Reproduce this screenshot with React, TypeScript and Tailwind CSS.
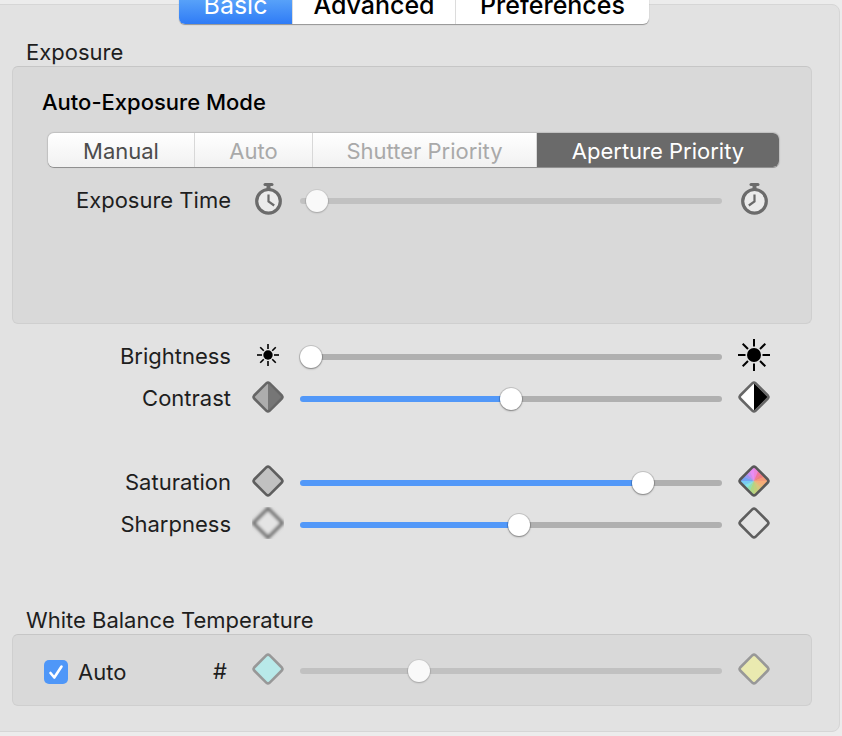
import { useState } from "react";
import type { ReactNode } from "react";

const DIAMOND = "M14.5 2.2Q16 0.9 17.5 2.2L29.8 14.5Q31.1 16 29.8 17.5L17.5 29.8Q16 31.1 14.5 29.8L2.2 17.5Q0.9 16 2.2 14.5Z";

function Icon({ children }: { children: ReactNode }) {
  return (
    <svg viewBox="0 0 32 32" className="mb-1 size-8 shrink-0" aria-hidden="true">
      {children}
    </svg>
  );
}

function Diamond({ fill, stroke = "#5e5e5e", children }: { fill: string; stroke?: string; children?: ReactNode }) {
  return (
    <Icon>
      <path d={DIAMOND} fill={fill} />
      {children}
      <path d={DIAMOND} fill="none" stroke={stroke} strokeWidth="2.6" />
    </Icon>
  );
}

function SplitDiamond({ left, right }: { left: string; right: string }) {
  return (
    <Diamond fill={left} stroke="#666666">
      <path d="M16 2L30 16L16 30Z" fill={right} />
    </Diamond>
  );
}

function SoftDiamond() {
  return (
    <Icon>
      <filter id="soften" x="-20%" y="-20%" width="140%" height="140%">
        <feGaussianBlur stdDeviation="1.5" />
      </filter>
      <path d="M16 1.5L30.5 16L16 30.5L1.5 16Z" fill="#e4e4e4" stroke="#727272" strokeWidth="3.6" strokeLinejoin="round" filter="url(#soften)" />
    </Icon>
  );
}

// Hues run clockwise from the top corner.
const HUES = [
  "#ec86d8", "#f2749c", "#f07c80", "#f39a78", "#f6ac78", "#eab877", "#d6c87c",
  "#c2d07c", "#b0d684", "#93dfb0", "#84e6e6", "#78ccf4", "#74a4f4", "#9a98f6", "#cc8ef4", "#e88cf4",
];

function ColorDiamond() {
  const step = 360 / HUES.length;
  return (
    <Diamond fill="#d8b8a0" stroke="#585858">
      <clipPath id="wheel">
        <path d={DIAMOND} />
      </clipPath>
      <g clipPath="url(#wheel)">
        {HUES.map((hue, i) => (
          <path key={hue} d="M16 16V-4H25Z" fill={hue} transform={`rotate(${i * step} 16 16)`} />
        ))}
      </g>
    </Diamond>
  );
}

function Sun({ large }: { large?: boolean }) {
  const rays = [0, 45, 90, 135, 180, 225, 270, 315];
  return (
    <Icon>
      <circle cx="16" cy="16" r={large ? 7 : 4.7} fill="#000" />
      {rays.map((angle) => (
        <path
          key={angle}
          d={large ? "M16 0V7.5" : "M16 5V10"}
          stroke="#000"
          strokeWidth={large ? 2 : 1.6}
          transform={`rotate(${angle} 16 16)`}
        />
      ))}
    </Icon>
  );
}

function Stopwatch({ long }: { long?: boolean }) {
  return (
    <Icon>
      <path d="M13 1.5H20" fill="none" stroke="#6b6b6b" strokeWidth="3" strokeLinecap="round" />
      <path d="M16.5 2V7" fill="none" stroke="#6b6b6b" strokeWidth="4" />
      <circle cx="16.5" cy="18.3" r="11.8" fill="#ebebeb" stroke="#6b6b6b" strokeWidth="3.2" />
      <path d={long ? "M16.5 11.5V18.5L10.8 22.5" : "M16.5 11.5V18.5L22.2 22.5"} fill="none" stroke="#6b6b6b" strokeWidth="2.2" />
    </Icon>
  );
}

type RangeProps = { id: string; initial: number; filled?: boolean; disabled?: boolean; label?: string };

function Range({ id, initial, filled, disabled, label }: RangeProps) {
  const [value, setValue] = useState(initial);
  const rest = disabled ? "#c1c1c1" : "#b0b0b0";
  const stop = filled ? value : 0;
  return (
    <input
      id={id}
      type="range"
      min={0}
      max={200}
      value={value}
      disabled={disabled}
      aria-label={label}
      onChange={(e) => setValue(Number(e.target.value))}
      style={{ backgroundImage: `linear-gradient(to right, #5298f8 ${stop / 2}%, ${rest} ${stop / 2}%)` }}
      className="mx-4 h-[6px] min-w-0 flex-1 appearance-none rounded-full [&::-webkit-slider-thumb]:size-[22px] [&::-webkit-slider-thumb]:appearance-none [&::-webkit-slider-thumb]:rounded-full [&::-webkit-slider-thumb]:bg-white [&::-webkit-slider-thumb]:shadow-[0_0_0_1px_rgba(0,0,0,0.13),0_1px_2px_rgba(0,0,0,0.35)] disabled:[&::-webkit-slider-thumb]:bg-[#f9f9f9] disabled:[&::-webkit-slider-thumb]:shadow-[0_0_0_1px_rgba(0,0,0,0.06),0_1px_2px_rgba(0,0,0,0.2)]"
    />
  );
}

function SliderRow({ name, low, high, ...range }: RangeProps & { name: string; low: ReactNode; high: ReactNode }) {
  return (
    <div className="flex h-[42px] items-center pr-[42px]">
      <label htmlFor={range.id} className="mr-[21px] w-[219px] shrink-0 pb-[2px] text-right">
        {name}
      </label>
      {low}
      <Range {...range} />
      {high}
    </div>
  );
}

const box = "rounded-md border border-[#cfcfcf] border-t-[#c6c6c6] bg-[#d9d9d9]";

const tabs = [
  { name: "Basic", width: "w-[114px]" },
  { name: "Advanced", width: "w-[163px]" },
  { name: "Preferences", width: "w-[193px]" },
];

const modes = [
  { name: "Manual", disabled: false },
  { name: "Auto", disabled: true },
  { name: "Shutter Priority", disabled: true },
  { name: "Aperture Priority", disabled: false },
];

export default function App() {
  const [tab, setTab] = useState("Basic");
  const [mode, setMode] = useState("Aperture Priority");
  const [auto, setAuto] = useState(true);

  return (
    <main className="min-h-screen overflow-hidden bg-[#ececec] py-1 font-['Inter','Liberation_Sans',sans-serif] text-[22px] leading-7 text-[#1e1e1e]">
      <div className="-ml-3 mr-[2px] rounded-lg border border-[#d6d6d6] bg-[#e2e2e2] pr-[27px] pb-[25px] pl-[23px]">
        <div role="tablist" className="-mt-[17px] ml-1 flex justify-center">
          <div className="flex h-9 divide-x divide-[#dcdcdc] overflow-hidden rounded-md bg-white shadow-[0_1px_1px_rgba(0,0,0,0.35)]">
            {tabs.map(({ name, width }) => (
              <button
                key={name}
                role="tab"
                aria-selected={tab === name}
                onClick={() => setTab(name)}
                className={`${width} pb-[2px] text-[25px] ${tab === name ? "bg-linear-to-b from-[#6cb3fa] to-[#2f7bf6] text-white" : "font-medium text-black"}`}
              >
                {name}
              </button>
            ))}
          </div>
        </div>

        <section aria-labelledby="exposure">
          <h2 id="exposure" className="mt-[14px] pl-[14px]">
            Exposure
          </h2>
          <div className={`${box} h-[258px]`}>
            <h3 id="mode" className="mt-[21px] pl-[29px] font-medium text-black">
              Auto-Exposure Mode
            </h3>
            <div
              role="group"
              aria-labelledby="mode"
              className="mt-[17px] mr-8 mb-[13px] ml-[35px] grid h-[34px] grid-cols-[147fr_118fr_224fr_242fr] divide-x divide-[#d8d8d8] overflow-hidden rounded-md bg-linear-to-b from-white to-[#f1f1f1] shadow-[0_0_1px_1px_rgba(0,0,0,0.12),0_1px_0_rgba(0,0,0,0.25)]"
            >
              {modes.map(({ name, disabled }) => (
                <button
                  key={name}
                  disabled={disabled}
                  aria-pressed={mode === name}
                  onClick={() => setMode(name)}
                  className={`pt-[2px] ${mode === name ? "bg-[#6a6a6a] text-white" : "text-[#4c4c4c] disabled:text-[#a9a9a9]"}`}
                >
                  {name}
                </button>
              ))}
            </div>
            <div className="-mx-px">
              <SliderRow id="time" name="Exposure Time" initial={3} disabled low={<Stopwatch />} high={<Stopwatch long />} />
            </div>
          </div>
        </section>

        <div className="mt-3">
          <SliderRow id="brightness" name="Brightness" initial={0} low={<Sun />} high={<Sun large />} />
          <SliderRow
            id="contrast"
            name="Contrast"
            initial={100}
            filled
            low={<SplitDiamond left="#adadad" right="#767676" />}
            high={<SplitDiamond left="#ffffff" right="#000000" />}
          />
        </div>
        <div className="mt-[42px]">
          <SliderRow id="saturation" name="Saturation" initial={166} filled low={<Diamond fill="#c1c1c1" />} high={<ColorDiamond />} />
          <SliderRow id="sharpness" name="Sharpness" initial={104} filled low={<SoftDiamond />} high={<Diamond fill="#e4e4e4" />} />
        </div>

        <section aria-labelledby="balance">
          <h2 id="balance" className="mt-[60px] pl-[14px]">
            White Balance Temperature
          </h2>
          <div className={`${box} flex h-[72px] items-center pt-[2px] pr-[41px]`}>
            <div className="mr-[21px] flex w-[218px] shrink-0 items-center justify-between pr-1 pl-[31px]">
              <label className="relative flex items-center gap-[10px] pt-[2px]">
                <input
                  type="checkbox"
                  checked={auto}
                  onChange={(e) => setAuto(e.target.checked)}
                  className="peer size-6 appearance-none rounded-[5px] bg-white checked:bg-[#4f97f8]"
                />
                <svg viewBox="0 0 24 24" className="pointer-events-none absolute left-0 size-6 opacity-0 peer-checked:opacity-100" aria-hidden="true">
                  <path d="M6.5 13L10.3 17.5L17.5 6.5" fill="none" stroke="#fff" strokeWidth="2.6" strokeLinecap="round" strokeLinejoin="round" />
                </svg>
                Auto
              </label>
              <span>#</span>
            </div>
            <Diamond fill="#b8e9e9" stroke="#989898" />
            <Range id="temperature" label="Temperature" initial={54} disabled={auto} />
            <Diamond fill="#eaeab0" stroke="#989898" />
          </div>
        </section>
      </div>
    </main>
  );
}
